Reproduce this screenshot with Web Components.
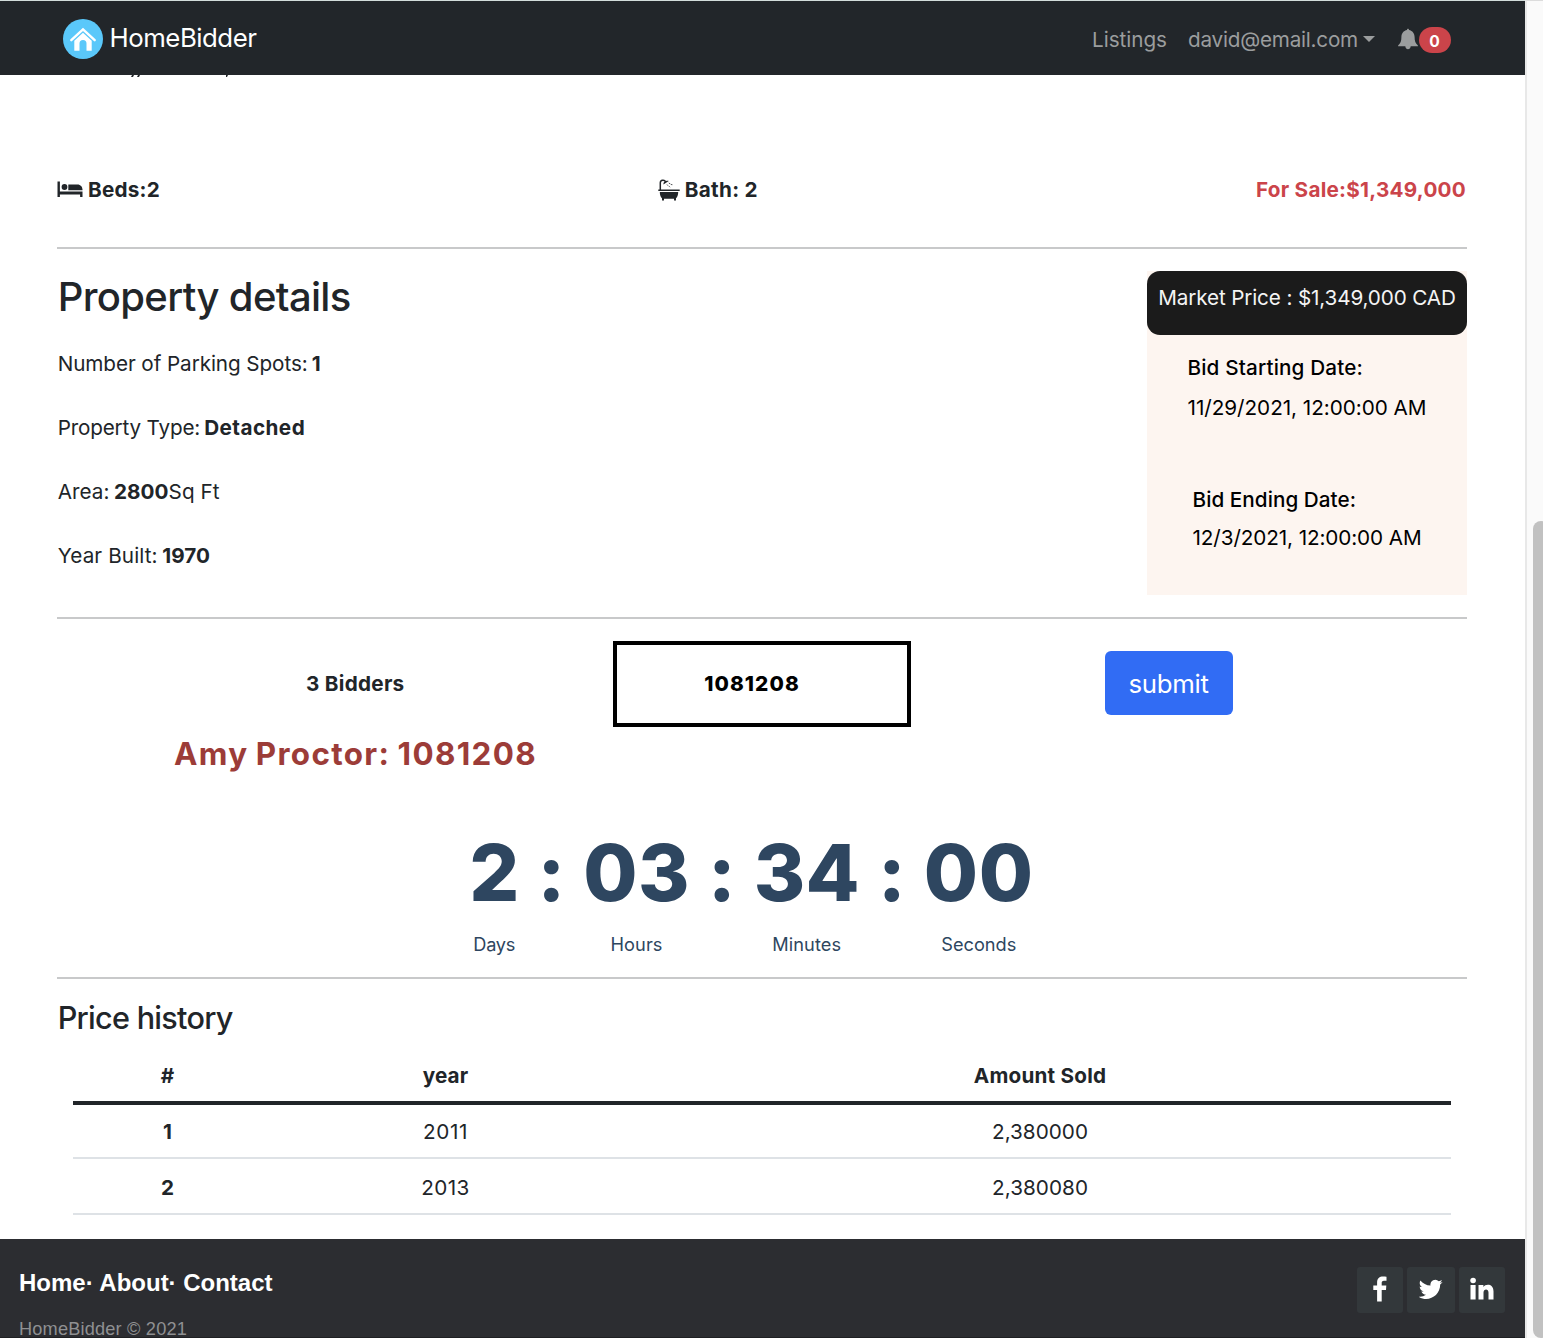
<!DOCTYPE html>
<html lang="en">
<head>
<meta charset="utf-8">
<title>HomeBidder</title>
<style>
html,body{margin:0;height:100%;overflow:hidden;background:#fff}
body{font-family:Inter,"Liberation Sans",sans-serif;font-size:20.7px;line-height:1;color:#212529}
</style>
</head>
<body>
<home-bidder-app></home-bidder-app>
<script>
class Base extends HTMLElement {
  connectedCallback() {
    if (this.shadowRoot) return;
    this.attachShadow({ mode: 'open' }).innerHTML =
      '<style>*{box-sizing:border-box}' + this.css() + '</style>' + this.html();
    this.ready();
  }
  css() { return ':host{display:block}'; }
  html() { return '<slot></slot>'; }
  ready() {}
}

/* One line of text, tracked to the width given in its "w" attribute. */
class TextLine extends Base {
  css() { return ':host{display:inline-block;white-space:nowrap;flex:none}'; }
  ready() {
    const w = parseFloat(this.getAttribute('w'));
    if (!w) return;
    const n = this.textContent.length;
    this.style.letterSpacing = ((w - this.getBoundingClientRect().width) / n).toFixed(3) + 'px';
  }
}
customElements.define('text-line', TextLine);

class SectionRule extends Base {
  css() { return ':host{display:block;height:2px;background:#c8c9ca;flex:none}'; }
  html() { return ''; }
}
customElements.define('section-rule', SectionRule);

class NavBar extends Base {
  css() { return `
    :host{display:flex;height:75px;flex:none;background:#22262a;border-top:1px solid #d3dddb;color:#9b9d9e;padding:0 74px 0 63px;justify-content:space-between}
    .brand{display:flex;align-items:center;height:74px;gap:6.5px;color:#fff;font-size:25.8px}
    .logo{width:40px;height:40px;display:block;margin-top:2px}
    .links{display:flex;align-items:center;height:77px}
    .links text-line{padding-top:2px}
    .caret{border:6px solid transparent;border-top-color:#9b9d9e;border-bottom:0;margin:-2px 22px 0 5px}
    .bell{width:22px;height:22px;display:block;margin-top:-1px}
    .badge{background:#cb444a;color:#fff;border-radius:13px;width:32px;height:26px;display:flex;align-items:center;justify-content:center;font-size:15.6px;font-weight:700;padding:4px 1px 0 0}
    .user{margin-left:21px}`; }
  html() { return `
    <div class="brand">
      <svg class="logo" viewBox="0 0 40 40"><circle cx="20" cy="20" r="20" fill="#5ac8fa"/><path d="M8.3 21.2 20 10.3l11.7 10.9" fill="none" stroke="#fff" stroke-width="2.4" stroke-linecap="round"/><path d="M11.3 21.8 20 13.8l8.700 8v10h-5.200v-7.200a3.500 3.500 0 0 0-7 0v7.200h-5.200z" fill="#fff"/></svg>
      <text-line w="147">HomeBidder</text-line>
    </div>
    <div class="links">
      <text-line w="75">Listings</text-line>
      <text-line class="user" w="170">david@email.com</text-line>
      <span class="caret"></span>
      <svg class="bell" viewBox="0 0 22 22" fill="#9b9d9e"><path d="M10 2.1C10 .3 12 .3 12 2.1c3.500.7 5.600 3.500 5.600 7 0 4 .8 6.600 3.300 8.300v.8H1.100v-.8c2.500-1.700 3.300-4.300 3.300-8.300 0-3.500 2.100-6.300 5.600-7zM8.300 18.200h5.400c-.2 4-5.200 4-5.400 0z"/></svg>
      <span class="badge">0</span>
    </div>`; }
}
customElements.define('nav-bar', NavBar);

class StatRow extends Base {
  css() { return `
    :host{display:grid;grid-template-columns:1fr 1fr 1fr;align-items:center;font-weight:700}
    div{display:flex;align-items:center}
    .bed{width:26px;height:18px;margin-right:5px;margin-left:-1px}
    .bath{width:22px;height:22px;margin-right:4.5px;margin-top:-1px}
    .mid{padding-left:131px}
    .price{justify-content:flex-end;color:#cb444a}`; }
  html() { return `
    <div><svg class="bed" viewBox="0 0 26 18" fill="#212529"><path d="M.5 .5h2.400v10H25.500v5.500h-2.400v-2.500H2.900v2.500H.5z"/><circle cx="7.500" cy="6" r="2.900"/><path d="M11.300 9.200V3.500h9.200c3 0 5 2.200 5 5.700z"/></svg><text-line w="72">Beds:2</text-line></div>
    <div class="mid"><svg class="bath" viewBox="0 0 22 22" fill="#212529"><path d="M2.300 11V3.800C2.300.5 6.700.4 7.600 2.800" fill="none" stroke="#212529" stroke-width="1.500"/><path d="M5.400 5.600C5 3 8 1 10.800 2.100z"/><path d="m9 5.500 1 1.200m.8-2.700 1.600 1M11 7.200l1 1m1-2.700 1.400.2" stroke="#212529" stroke-width=".8"/><path d="M.3 10.500h21.400V12H.3zM1.800 13h18.400c0 3-.8 5.200-2.200 6.300v2.200h-2v-1.700H6v1.700H4v-2.200C2.600 18.200 1.800 16 1.800 13z"/></svg><text-line w="73">Bath: 2</text-line></div>
    <div class="price"><text-line w="210">For Sale:$1,349,000</text-line></div>`; }
}
customElements.define('stat-row', StatRow);

class BidCard extends Base {
  css() { return `
    :host{display:block;width:320px;height:324px;background:#fdf5f0;color:#000}
    header{height:64px;background:#1b1b1b;border-radius:13px;color:#f4f4f4;display:flex;justify-content:center;padding-top:6px;line-height:41px}
    .d{padding-left:40.500px;line-height:40px}
    .d>div{display:flex}
    .start{padding-top:13px}
    .end{padding:53px 0 0 45.500px;line-height:38px}
    .l{font-weight:500}`; }
  html() { return `
    <header><text-line w="297.500">Market Price : $1,349,000 CAD</text-line></header>
    <div class="d start"><div><text-line class="l" w="175.500">Bid Starting Date:</text-line></div><div><text-line w="239">11/29/2021, 12:00:00 AM</text-line></div></div>
    <div class="d end"><div><text-line class="l" w="163.500">Bid Ending Date:</text-line></div><div><text-line w="229">12/3/2021, 12:00:00 AM</text-line></div></div>`; }
}
customElements.define('bid-card', BidCard);

class PropertyDetails extends Base {
  css() { return `
    :host{display:flex;justify-content:space-between;height:368px;padding-top:22px}
    section{padding-left:.7px}
    h1{font-size:40px;font-weight:500;margin:0;height:61px;line-height:52px}
    p{margin:0;height:64px;line-height:64px}
    b{font-weight:700;margin-left:-1.500px}
    .t b{letter-spacing:.45px}`; }
  html() { return `
    <section>
      <h1><text-line w="293">Property details</text-line></h1>
      <p><text-line w="263">Number of Parking Spots: <b>1</b></text-line></p>
      <p class="t"><text-line w="246">Property Type: <b>Detached</b></text-line></p>
      <p><text-line w="162">Area: <b>2800</b>Sq Ft</text-line></p>
      <p><text-line w="152.500">Year Built: <b>1970</b></text-line></p>
    </section>
    <bid-card></bid-card>`; }
}
customElements.define('property-details', PropertyDetails);

class BidForm extends Base {
  css() { return `
    :host{display:grid;grid-template-columns:556px 298px 194px 128px;height:86px;margin-top:22px;align-items:center}
    .count{padding-left:249px;font-weight:700}
    input{width:298px;height:86px;border:4px solid #000;border-radius:0;background:#fff;margin:0;padding:0 20px 1px 0;text-align:center;font:800 20.8px Inter,sans-serif;letter-spacing:1.100px;color:#000;outline:0}
    button{grid-column:4;width:128px;height:64px;margin-top:-2px;border:0;border-radius:6px;background:#316cf4;color:#fff;font:400 25.800px Inter,sans-serif;padding:1px 1px 0 0}`; }
  html() { return `
    <div class="count"><text-line w="98.500">3 Bidders</text-line></div>
    <input value="1081208" aria-label="Bid amount">
    <button><text-line w="80">submit</text-line></button>`; }
}
customElements.define('bid-form', BidForm);

class CountDown extends Base {
  css() { return `
    :host{display:flex;justify-content:center;height:153px;color:#2e4660;padding-right:21px;font-size:78.500px;font-weight:800;align-items:flex-start}
    .u{display:flex;flex-direction:column;align-items:center;flex:none}
    .n{height:97px;line-height:97px}
    .u small{font-size:18.200px;font-weight:400;line-height:46px;height:46px}
    .c{width:64px;text-align:center;line-height:97px;flex:none}`; }
  html() {
    const unit = (n, nw, l, lw) => `<div class="u" style="width:${nw}px"><text-line class="n" w="${nw}">${n}</text-line><small><text-line w="${lw}">${l}</text-line></small></div>`;
    const c = '<span class="c">:</span>';
    return unit('2', 50, 'Days', 42) + c + unit('03', 106.5, 'Hours', 52) + c + unit('34', 106, 'Minutes', 69) + c + unit('00', 110, 'Seconds', 75);
  }
}
customElements.define('count-down', CountDown);

class PriceHistory extends Base {
  css() { return `
    :host{display:block}
    h2{font-size:30.600px;font-weight:500;margin:0;height:69px;line-height:78px;padding-left:.7px}
    table{border-collapse:separate;border-spacing:0;width:1378px;margin:0 16px;table-layout:fixed;text-align:center}
    th,td{padding:2px 0 0;height:56px;border-bottom:2px solid #dee2e6;vertical-align:middle}
    th{font-weight:700}
    thead th{height:57px;padding-top:3px;border-bottom:4px solid #212529}
    tbody tr:first-child>*{height:54px}
    tbody tr:last-child>*{padding-top:4px}`; }
  html() { return `
    <h2><text-line w="175">Price history</text-line></h2>
    <table>
      <colgroup><col style="width:189px"><col style="width:367px"><col></colgroup>
      <thead><tr><th>#</th><th><text-line w="45.500">year</text-line></th><th><text-line w="132.500">Amount Sold</text-line></th></tr></thead>
      <tbody>
        <tr><th>1</th><td><text-line w="45">2011</text-line></td><td><text-line w="96">2,380000</text-line></td></tr>
        <tr><th>2</th><td><text-line w="48.500">2013</text-line></td><td><text-line w="96">2,380080</text-line></td></tr>
      </tbody>
    </table>`; }
}
customElements.define('price-history', PriceHistory);

class SiteFooter extends Base {
  css() { return `
    :host{display:flex;justify-content:space-between;height:99px;flex:none;background:#2c2d31;padding:28px 20px 0 18px;font-family:"Liberation Sans",sans-serif;overflow:hidden;border-bottom:1px solid #1f2023}
    nav{color:#fff;font-weight:700;font-size:24px;line-height:31px;padding-left:1px}
    p{margin:0;font-size:18.200px;color:#8f9092;line-height:20px;padding:21px 0 0 1px}
    .s{display:flex;gap:4px}
    .s span{width:46px;height:46px;border-radius:3px;background:#33383b;display:flex;align-items:center;justify-content:center}
    .s span:nth-child(2){width:48px}
    svg{display:block;fill:#fff;margin-top:-2px}`; }
  html() { return `
    <div><nav><text-line w="253.500">Home· About· Contact</text-line></nav><p><text-line w="168">HomeBidder © 2021</text-line></p></div>
    <div class="s">
      <span><svg width="14" height="26" viewBox="0 0 14 26"><path d="M13.500.7v4.100h-2.500c-1.900 0-2.300.9-2.300 2.300v2.500h4.600l-.3 4.400H8.700V25.500H4.100V14H.3V9.600h3.800V6.400C4.100 2.500 6.500.5 10 .5c1.600 0 3 .1 3.500.2z"/></svg></span>
      <span><svg width="24" height="24" viewBox="0 0 24 24"><path d="M23.600 4.900c-.9.4-1.800.7-2.800.8 1-.6 1.800-1.600 2.100-2.700-.9.600-2 1-3.100 1.200A4.900 4.900 0 0 0 11.500 8.600C7.400 8.400 3.800 6.500 1.400 3.500c-1.300 2.300-.7 5.100 1.500 6.500-.8 0-1.500-.2-2.200-.6 0 2.400 1.600 4.400 3.900 4.900-.7.2-1.500.2-2.200.1.600 1.900 2.400 3.300 4.600 3.400A9.900 9.900 0 0 1-.2 19.800C9.200 25.600 21.300 19 21.200 7.400c.9-.7 1.800-1.500 2.400-2.500z"/></svg></span>
      <span><svg width="24" height="24" viewBox="0 0 24 24"><circle cx="3.100" cy="3.500" r="2.800"/><path d="M.5 8.100h5.100v14.500H.5zM8.500 8.100h4.900v2c2.200-3.600 10.100-3.600 10.100 4.200v8.300h-5v-7.100c0-4.300-5-4-5 0v7.100h-5z"/></svg></span>
    </div>`; }
}
customElements.define('site-footer', SiteFooter);

class ScrollRail extends Base {
  css() { return `
    :host{display:block;width:18px;flex:none;background:#fafafa;border-left:2px solid #e8e8e8;border-top:1px solid #dcdcdc;padding:520px 0 0 6px;overflow:hidden}
    i{display:block;width:16px;height:817px;border-radius:8px;background:#c1c1c1}`; }
  html() { return '<i></i>'; }
}
customElements.define('scroll-rail', ScrollRail);

class HomeBidderApp extends Base {
  css() { return `
    :host{display:flex;height:1338px;width:1543px}
    .page{width:1525px;display:flex;flex-direction:column}
    main{height:1164px;padding:0 58px 0 57px;display:flex;flex-direction:column}
    .peek{height:3px;width:100px;margin-left:73px;flex:none;display:block}
    stat-row{margin:95px 1px 40px;height:34px;flex:none}
    property-details,bid-form,count-down,price-history{flex:none}
    .leader{height:84px;line-height:54px;padding-left:117px;font-size:31.400px;font-weight:700;color:#9c3c38;flex:none;word-spacing:-1.500px}
    count-down{margin-top:13px}`; }
  html() { return `
    <div class="page">
      <nav-bar></nav-bar>
      <main>
        <svg class="peek" viewBox="0 0 100 3"><path d="M2 0h2l-1 2H1zM8 0h2L9 2H7zM96 0h2l-1 2h-1z" fill="#212529"/></svg>
        <stat-row></stat-row>
        <section-rule></section-rule>
        <property-details></property-details>
        <section-rule></section-rule>
        <bid-form></bid-form>
        <div class="leader"><text-line w="363">Amy Proctor: 1081208</text-line></div>
        <count-down></count-down>
        <section-rule></section-rule>
        <price-history></price-history>
      </main>
      <site-footer></site-footer>
    </div>
    <scroll-rail></scroll-rail>`; }
}
customElements.define('home-bidder-app', HomeBidderApp);
</script>
</body>
</html>
